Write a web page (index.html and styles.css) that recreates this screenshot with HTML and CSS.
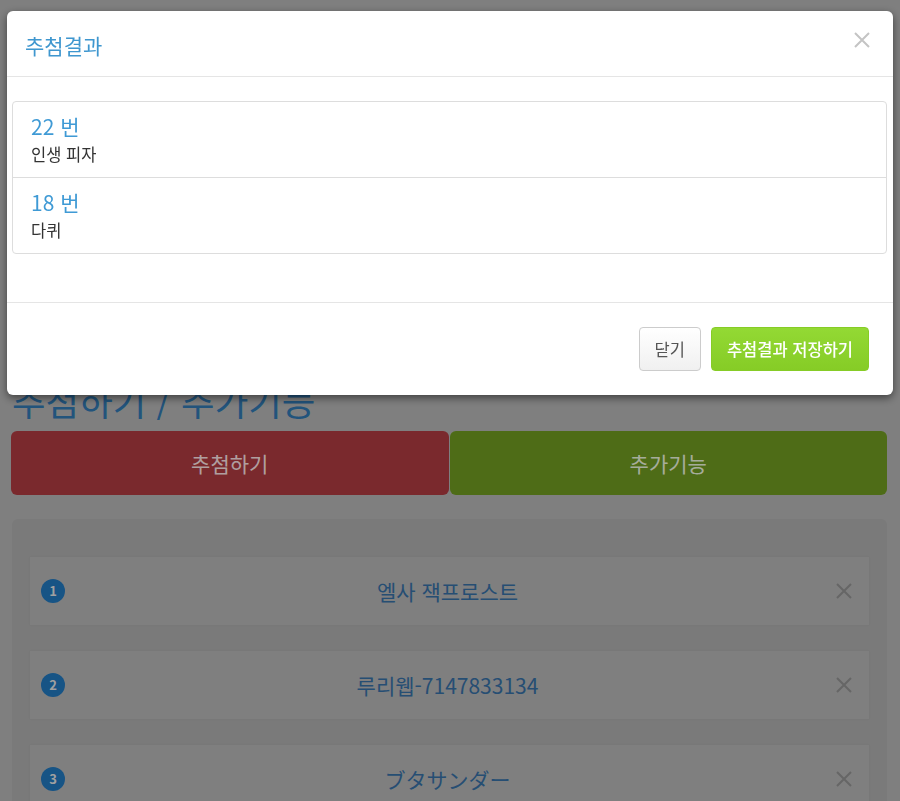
FILE: index.html
```html
<!DOCTYPE html>
<html lang="ko">
<head>
<meta charset="utf-8">
<title>추첨결과</title>
<link rel="stylesheet" href="styles.css">
</head>
<body>
<div class="page">
  <h1 class="page-title">추첨하기 / 추가기능</h1>
  <div class="actions">
    <button class="big-btn big-red">추첨하기</button>
    <button class="big-btn big-green">추가기능</button>
  </div>
  <div class="panel">
    <div class="entry">
      <span class="badge">1</span>
      <span class="entry-name">엘사 잭프로스트</span>
      <span class="remove"><svg viewBox="0 0 20 20" width="20" height="20"><path d="M3 3 L17 17 M17 3 L3 17" stroke="currentColor" stroke-width="2" fill="none"/></svg></span>
    </div>
    <div class="entry">
      <span class="badge">2</span>
      <span class="entry-name">루리웹-7147833134</span>
      <span class="remove"><svg viewBox="0 0 20 20" width="20" height="20"><path d="M3 3 L17 17 M17 3 L3 17" stroke="currentColor" stroke-width="2" fill="none"/></svg></span>
    </div>
    <div class="entry">
      <span class="badge">3</span>
      <span class="entry-name">ブタサンダー</span>
      <span class="remove"><svg viewBox="0 0 20 20" width="20" height="20"><path d="M3 3 L17 17 M17 3 L3 17" stroke="currentColor" stroke-width="2" fill="none"/></svg></span>
    </div>
  </div>
</div>

<div class="backdrop"></div>

<div class="modal">
  <div class="modal-header">
    <h4 class="modal-title">추첨결과</h4>
    <span class="modal-close"><svg viewBox="0 0 18 18" width="18" height="18"><path d="M2 2 L16 16 M16 2 L2 16" stroke="currentColor" stroke-width="2" fill="none"/></svg></span>
  </div>
  <div class="modal-body">
    <div class="result-list">
      <div class="result-item">
        <div class="result-num">22 번</div>
        <div class="result-name">인생 피자</div>
      </div>
      <div class="result-item">
        <div class="result-num">18 번</div>
        <div class="result-name">다퀴</div>
      </div>
    </div>
  </div>
  <div class="modal-footer">
    <button class="btn btn-default">닫기</button>
    <button class="btn btn-save">추첨결과 저장하기</button>
  </div>
</div>
</body>
</html>
```

FILE: styles.css
```css
html, body {
  margin: 0;
  padding: 0;
  height: 100%;
  overflow: hidden;
}

body {
  background: #aaaaaa;
  font-family: "Noto Sans CJK KR", "Noto Sans", sans-serif;
  color: #333;
}

.page {
  padding: 0 13px 0 11px;
}

.page-title {
  margin: 381px 0 11px 1px;
  font-size: 36.5px;
  line-height: 39px;
  font-weight: 400;
  color: #2e70a6;
}

.actions {
  display: flex;
  gap: 1px;
}

.big-btn {
  flex: 1;
  height: 64px;
  border: none;
  border-radius: 6px;
  font-family: inherit;
  font-size: 21px;
  color: rgba(255, 255, 255, 0.8);
}

.big-red { background: #a3373d; }
.big-green { background: #68901f; }

.panel {
  margin: 24px 0 0 1px;
  padding: 38px 18px;
  background: #a3a3a3;
  border-radius: 6px;
}

.entry {
  display: grid;
  grid-template-columns: 1fr auto 1fr;
  align-items: center;
  height: 68px;
  padding: 0 15px 0 11px;
  margin-bottom: 26px;
  background: #aaaaaa;
  box-shadow: 0 0 2px rgba(0, 0, 0, 0.06);
}

.badge {
  justify-self: start;
  width: 24px;
  height: 24px;
  border-radius: 50%;
  background: #1f70b2;
  color: #d6d6d6;
  font-size: 13px;
  font-weight: 700;
  line-height: 24px;
  text-align: center;
}

.entry-name {
  font-size: 21px;
  color: #33689a;
}

.remove {
  justify-self: end;
  display: flex;
  color: #888;
}

.backdrop {
  position: fixed;
  inset: 0;
  background: rgba(0, 0, 0, 0.25);
}

.modal {
  position: fixed;
  left: 7px;
  top: 11px;
  width: 886px;
  background: #fff;
  border-radius: 6px;
  box-shadow: 0 3px 9px rgba(0, 0, 0, 0.5);
}

.modal-header {
  display: flex;
  align-items: center;
  justify-content: space-between;
  height: 65px;
  padding: 0 22px 0 18px;
  border-bottom: 1px solid #e5e5e5;
}

.modal-title {
  margin: 2px 0 0;
  font-size: 21px;
  font-weight: 400;
  color: #3f97cf;
}

.modal-close {
  display: flex;
  color: #c4c4c4;
  margin-top: -8px;
}

.modal-body {
  padding: 24px 6px 48px 5px;
}

.result-list {
  border: 1px solid #dddddd;
  border-radius: 4px;
}

.result-item {
  padding: 10px 18px 11px;
}

.result-item + .result-item {
  border-top: 1px solid #dddddd;
}

.result-num {
  font-size: 21px;
  line-height: 28px;
  color: #3f9ad5;
}

.result-name {
  margin-top: 2px;
  font-size: 16.5px;
  line-height: 24px;
  color: #333;
}

.modal-footer {
  display: flex;
  justify-content: flex-end;
  gap: 10px;
  padding: 24px 24px 24px;
  border-top: 1px solid #e5e5e5;
}

.btn {
  height: 44px;
  padding: 0 15px;
  border-radius: 4px;
  font-family: inherit;
  font-size: 16.5px;
}

.btn-default {
  background: linear-gradient(#ffffff, #f0f0f0);
  border: 1px solid #cccccc;
  color: #555;
}

.btn-save {
  background: linear-gradient(#93d934, #86cc26);
  border: 1px solid #86cc26;
  color: #fff;
  font-weight: 500;
}
```
